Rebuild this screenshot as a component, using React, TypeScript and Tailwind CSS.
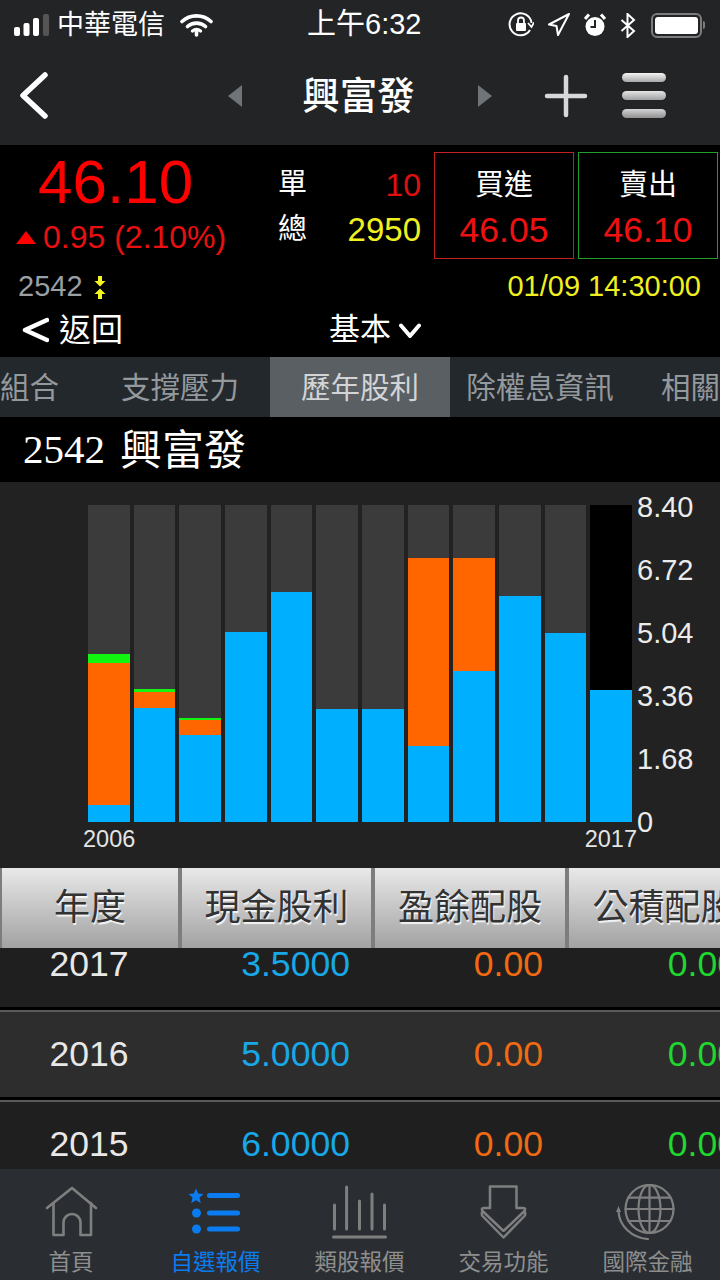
import React from "react";

const bars = [
  { blue: 17, orange: 142, green: 9 },
  { blue: 114, orange: 16, green: 3 },
  { blue: 87, orange: 15, green: 2 },
  { blue: 190 },
  { blue: 230 },
  { blue: 113 },
  { blue: 113 },
  { blue: 76, orange: 188 },
  { blue: 151, orange: 113 },
  { blue: 226 },
  { blue: 189 },
  { blue: 132, black: true },
];

const rows = [
  { year: "2017", cash: "3.5000", alt: false },
  { year: "2016", cash: "5.0000", alt: true },
  { year: "2015", cash: "6.0000", alt: false },
];

const axis = ["8.40", "6.72", "5.04", "3.36", "1.68", "0"];

function StatusLeft() {
  return (
    <div className="flex items-center w-[307px] shrink-0 pl-[14px]">
      <svg width="37" height="24" viewBox="0 0 37 24" className="shrink-0">
        <rect x="0" y="14" width="6" height="9" rx="2" fill="#fff" />
        <rect x="9.5" y="10" width="6" height="13" rx="2" fill="#fff" />
        <rect x="19" y="5" width="6" height="18" rx="2" fill="#fff" />
        <rect x="29" y="1" width="6" height="22" rx="2" fill="#555" />
      </svg>
      <span className="ml-[6px] text-[27px] leading-[34px] text-white whitespace-nowrap">中華電信</span>
      <svg width="33" height="24" viewBox="0 0 33 24" className="ml-[15px] shrink-0" fill="none" stroke="#fff" strokeLinecap="round">
        <path d="M2 8.5C10 1 23 1 31 8.5" strokeWidth="3.6" />
        <path d="M7.5 13.5C12.5 9 20.5 9 25.5 13.5" strokeWidth="3.6" />
        <path d="M12.5 18C15 16 18 16 20.5 18" strokeWidth="3.4" />
        <path d="M16.5 19.5v2.5" strokeWidth="3.6" />
      </svg>
    </div>
  );
}

function StatusRight() {
  return (
    <div className="ml-auto flex items-center pr-[15px]">
      <svg width="26" height="26" viewBox="0 0 26 26" fill="none" stroke="#fff" className="shrink-0">
        <path d="M22 18A11 11 0 1 1 23.5 11" strokeWidth="2" />
        <path d="M20 11l3.5 4 2.500-4.500" strokeWidth="1.800" />
        <rect x="8" y="11" width="10" height="8" rx="1" fill="#fff" stroke="none" />
        <path d="M10 11V8.500a3 3 0 0 1 6 0V11" strokeWidth="1.800" />
      </svg>
      <svg width="22" height="24" viewBox="0 0 22 24" className="ml-[14px] shrink-0" fill="none" stroke="#fff" strokeWidth="2" strokeLinejoin="round">
        <path d="M21 1L10 22l-1.500-9L1 11.500z" />
      </svg>
      <svg width="22" height="24" viewBox="0 0 22 24" className="ml-[14px] shrink-0">
        <circle cx="11" cy="13.500" r="9.500" fill="#fff" />
        <path d="M11 7v7H6.500" fill="none" stroke="#222426" strokeWidth="2" />
        <path d="M1 6l4-4.500M21 6l-4-4.500" stroke="#fff" strokeWidth="3" />
      </svg>
      <svg width="16" height="25" viewBox="0 0 16 25" className="ml-[14px] shrink-0" fill="none" stroke="#fff" strokeWidth="2">
        <path d="M1.500 7L14 18l-6.500 6V1L14 7 1.500 18" />
      </svg>
      <div className="ml-[15px] flex items-center">
        <div className="w-[51px] h-[25px] rounded-[6px] border-[2.5px] border-[#7c7c7c] p-[2px]">
          <div className="w-full h-full rounded-[3px] bg-white" />
        </div>
        <div className="ml-[1px] w-[2px] h-[8px] rounded-r-sm bg-[#7c7c7c]" />
      </div>
    </div>
  );
}

function NavBar() {
  return (
    <div className="flex items-center h-[95px] pb-[4px]">
      <svg width="30" height="47" viewBox="0 0 30 47" className="ml-[19px] shrink-0" fill="none" stroke="#fff" strokeWidth="5.500" strokeLinecap="round" strokeLinejoin="round">
        <path d="M26 3L4 23.500 26 44" />
      </svg>
      <svg width="14" height="22" viewBox="0 0 14 22" className="ml-[179px] shrink-0">
        <path d="M14 0v22L0 11z" fill="#6f7478" />
      </svg>
      <span className="ml-[60px] w-[113px] text-center text-[37.500px] leading-[50px] font-medium text-white whitespace-nowrap">興富發</span>
      <svg width="14" height="22" viewBox="0 0 14 22" className="ml-[63px] shrink-0">
        <path d="M0 0v22l14-11z" fill="#6f7478" />
      </svg>
      <svg width="44" height="44" viewBox="0 0 44 44" className="ml-[52px] shrink-0" fill="none" stroke="#d8d8d8" strokeWidth="4.500" strokeLinecap="round">
        <path d="M22 3v38M3 22h38" />
      </svg>
      <div className="ml-[34px] flex flex-col gap-[9px] w-[44px]">
        <div className="h-[9px] rounded-full bg-gradient-to-b from-[#f5f5f5] to-[#a8a8a8]" />
        <div className="h-[9px] rounded-full bg-gradient-to-b from-[#e5e5e5] to-[#a0a0a0]" />
        <div className="h-[9px] rounded-full bg-gradient-to-b from-[#d5d5d5] to-[#909090]" />
      </div>
    </div>
  );
}

function Info() {
  return (
    <div className="h-[212px] bg-black">
      <div className="flex h-[114px]">
        <div className="w-[278px] shrink-0 pt-[6px]">
          <div className="pl-[38px] text-[62px] leading-[62px] text-[#ff0000]">46.10</div>
          <div className="mt-[7px] pl-[16px] flex items-center text-[32px] leading-[34px] text-[#e81010] whitespace-nowrap">
            <span className="w-0 h-0 border-l-[10px] border-r-[10px] border-b-[13px] border-l-transparent border-r-transparent border-b-[#ff0000]" />
            <span className="ml-[7px]">0.95 (2.10%)</span>
          </div>
        </div>
        <div className="w-[143px] shrink-0 pt-[23px]">
          <div className="flex justify-between items-center h-[34px]">
            <span className="text-[29px] text-white">單</span>
            <span className="text-[32px] text-[#e01010]">10</span>
          </div>
          <div className="mt-[11px] flex justify-between items-center h-[34px]">
            <span className="text-[29px] text-white">總</span>
            <span className="text-[33px] text-[#f0f020]">2950</span>
          </div>
        </div>
        <div className="ml-[13px] mt-[7px] flex gap-[4px] shrink-0">
          <div className="w-[140px] h-[107px] border border-[#c42222] flex flex-col items-center pt-[15px]">
            <span className="text-[29px] leading-[34px] text-white">買進</span>
            <span className="mt-[11px] text-[35.500px] leading-[34px] text-[#ee1111]">46.05</span>
          </div>
          <div className="w-[140px] h-[107px] border border-[#1f9f2a] flex flex-col items-center pt-[15px]">
            <span className="text-[29px] leading-[34px] text-white">賣出</span>
            <span className="mt-[11px] text-[35.500px] leading-[34px] text-[#ee1111]">46.10</span>
          </div>
        </div>
      </div>
      <div className="mt-[13px] flex items-center h-[30px] pl-[18px] pr-[19px]">
        <span className="text-[29px] text-[#9a9fa3]">2542</span>
        <svg width="12" height="23" viewBox="0 0 12 23" className="ml-[11px] shrink-0" fill="#f5f520">
          <path d="M4 0h4v5h3.500L6 10.500.5 5H4zM6 12.500L11.500 18H8v5H4v-5H.5z" />
        </svg>
        <span className="ml-auto text-[29px] text-[#f0f020]">01/09 14:30:00</span>
      </div>
      <div className="mt-[10px] flex items-center h-[36px] pl-[21px]">
        <svg width="28" height="26" viewBox="0 0 28 26" className="shrink-0" fill="none" stroke="#fff" strokeWidth="4.500" strokeLinecap="round" strokeLinejoin="round">
          <path d="M26 3L4 13l22 10" />
        </svg>
        <span className="ml-[10px] text-[32px] leading-[36px] text-white">返回</span>
        <span className="ml-[206px] text-[31px] leading-[36px] text-white">基本</span>
        <svg width="24" height="15" viewBox="0 0 24 15" className="ml-[7px] shrink-0" fill="none" stroke="#fff" strokeWidth="4" strokeLinecap="round" strokeLinejoin="round">
          <path d="M3 2.500L12 13l9-10.500" />
        </svg>
      </div>
    </div>
  );
}

function Tabs() {
  const tabs = ["投資組合", "支撐壓力", "歷年股利", "除權息資訊", "相關新聞"];
  return (
    <div className="h-[60px] bg-[#23282c] flex -ml-[90px]">
      {tabs.map((t, i) => (
        <div
          key={t}
          className={
            i === 2
              ? "w-[180px] shrink-0 flex items-center justify-center pt-[3px] bg-[#5a5f63] text-[29.500px] text-[#d2d4d6] whitespace-nowrap"
              : "w-[180px] shrink-0 flex items-center justify-center pt-[3px] text-[29.500px] text-[#94999d] whitespace-nowrap"
          }
        >
          {t}
        </div>
      ))}
    </div>
  );
}

function Chart() {
  return (
    <div className="h-[386px] bg-[#222222] flex">
      <div className="ml-[88px] mt-[23px] w-[544px] shrink-0">
        <div className="flex gap-[4px] h-[317px]">
          {bars.map((b, i) => (
            <div key={i} className={b.black ? "flex-1 flex flex-col justify-end bg-black" : "flex-1 flex flex-col justify-end bg-[#3b3b3b]"}>
              {b.green ? <div className="bg-[#11f511]" style={{ height: b.green }} /> : null}
              {b.orange ? <div className="bg-[#ff6600]" style={{ height: b.orange }} /> : null}
              <div className="bg-[#00b0ff]" style={{ height: b.blue }} />
            </div>
          ))}
        </div>
        <div className="flex justify-between -ml-[5px] -mr-[5px] text-[23.500px] leading-[34px] text-[#e4e4e4]">
          <span>2006</span>
          <span>2017</span>
        </div>
      </div>
      <div className="ml-[5px] mt-[10px] h-[345px] flex flex-col justify-between text-[29px] leading-[30px] text-[#ececec]">
        {axis.map((a) => (
          <span key={a}>{a}</span>
        ))}
      </div>
    </div>
  );
}

function HeaderCell({ label, className }: { label: string; className: string }) {
  return (
    <div className={className}>
      <span className="text-[36px] text-[#333333] whitespace-nowrap [text-shadow:1px_2px_1px_rgba(255,255,255,0.85)]">{label}</span>
    </div>
  );
}

function Table() {
  const cell = "shrink-0 h-full flex items-center justify-center bg-gradient-to-b from-[#e9e9e9] to-[#a2a2a2]";
  return (
    <div className="h-[302px] overflow-hidden bg-[#1f1f1f]">
      <div className="relative z-10 h-[80px] flex gap-[4px] bg-[#7d7d7d] pl-[2px]">
        <HeaderCell label="年度" className={`${cell} w-[176px]`} />
        <HeaderCell label="現金股利" className={`${cell} w-[189px]`} />
        <HeaderCell label="盈餘配股" className={`${cell} w-[190px]`} />
        <HeaderCell label="公積配股" className={`${cell} w-[191px]`} />
      </div>
      <div className="-mt-[26px]">
        {rows.map((r) => (
          <div key={r.year}>
            <div className={r.alt ? "h-[85px] flex items-center bg-[#2d2d2d] text-[35.600px] whitespace-nowrap" : "h-[85px] flex items-center bg-[#1f1f1f] text-[35.600px] whitespace-nowrap"}>
              <span className="w-[178px] shrink-0 text-center text-[#e8e8e8]">{r.year}</span>
              <span className="w-[172px] shrink-0 text-right text-[#18a8e8]">{r.cash}</span>
              <span className="w-[193px] shrink-0 text-right text-[#f06a14]">0.00</span>
              <span className="w-[194px] shrink-0 text-right text-[#1fd82f]">0.00</span>
            </div>
            <div className="h-[3px] bg-black" />
            <div className="h-[2px] bg-[#5a5a5a]" />
          </div>
        ))}
      </div>
    </div>
  );
}

function TabBar() {
  const gray = "#7f7f7f";
  const label = "mt-[9px] text-[22.500px] leading-[28px] whitespace-nowrap";
  return (
    <div className="h-[111px] bg-[#2a2e33] grid grid-cols-5 pt-[15px] -mt-[1px] relative z-10">
      <div className="flex flex-col items-center">
        <svg width="56" height="56" viewBox="0 0 56 56" fill="none" stroke={gray} strokeWidth="2.600" strokeLinecap="round" strokeLinejoin="round">
          <path d="M3 24L28 4l24 20" />
          <path d="M9.500 19V51H19.500V38.500a8.500 8.500 0 0 1 17 0V51H47V19" />
        </svg>
        <span className={`${label} -ml-[2px] text-[#8e8e8e]`}>首頁</span>
      </div>
      <div className="flex flex-col items-center">
        <svg width="56" height="56" viewBox="0 0 56 56" fill="#0a7cf0">
          <path d="M8 4.500l2.200 5 5.300.5-4 3.600 1.200 5.400L8 16.200 3.300 19l1.200-5.400-4-3.600 5.300-.5z" />
          <circle cx="8.500" cy="29" r="4.500" />
          <circle cx="8.500" cy="45" r="4.500" />
          <rect x="19" y="9" width="33" height="5" rx="2.500" />
          <rect x="19" y="26.500" width="33" height="5" rx="2.500" />
          <rect x="19" y="42.500" width="33" height="5" rx="2.500" />
        </svg>
        <span className={`${label} -ml-[1px] text-[#0a7cf0]`}>自選報價</span>
      </div>
      <div className="flex flex-col items-center">
        <svg width="56" height="56" viewBox="0 0 56 56" fill="none" stroke={gray} strokeWidth="3" strokeLinecap="round">
          <path d="M2.500 21v24M14.600 3v42M27.500 17v28M40 10v35M52.500 21v24" />
          <path d="M1.500 53h52" />
        </svg>
        <span className={`${label} -ml-[1px] text-[#8e8e8e]`}>類股報價</span>
      </div>
      <div className="flex flex-col items-center">
        <svg width="56" height="56" viewBox="0 0 56 56" fill="none" stroke={gray} strokeWidth="2.500" strokeLinecap="round" strokeLinejoin="round">
          <path d="M14 24V2.500H40.500V24H47.500Q50 24 48.500 27L28 46.500Q27.500 47 27 46.500L6.500 27Q5 24 7.500 24Z" />
          <path d="M6.500 27Q5 30 6.500 32L27.500 53.500 48.500 32Q50 30 48.500 27" />
        </svg>
        <span className={`${label} -ml-[1px] text-[#8e8e8e]`}>交易功能</span>
      </div>
      <div className="flex flex-col items-center">
        <svg width="64" height="56" viewBox="0 0 64 56" fill="none" stroke={gray} strokeWidth="2.200" strokeLinecap="round">
          <circle cx="33.500" cy="25" r="24" />
          <ellipse cx="33.500" cy="25" rx="11" ry="24" />
          <path d="M33.500 1v48M12.500 13.700h42M9.500 25h48M12.500 37h42" />
          <path d="M2.500 27C3 42 16 54 32 55" />
          <path d="M2.500 22L0 28h5z" fill={gray} stroke="none" />
        </svg>
        <span className={`${label} -ml-[1px] text-[#8e8e8e]`}>國際金融</span>
      </div>
    </div>
  );
}

export default function App() {
  return (
    <div className="w-[720px] h-[1280px] overflow-hidden bg-black font-['Liberation_Sans','Noto_Sans_CJK_TC',sans-serif]">
      <div className="h-[145px] bg-[#222426]">
        <div className="flex items-center h-[50px]">
          <StatusLeft />
          <span className="text-[29px] text-white whitespace-nowrap">上午6:32</span>
          <StatusRight />
        </div>
        <NavBar />
      </div>
      <Info />
      <Tabs />
      <div className="h-[65px] bg-black flex items-center pl-[23px] pt-[1px] text-white whitespace-nowrap">
        <span className="font-['Liberation_Serif','Noto_Sans_CJK_TC',serif] text-[41px]">2542</span>
        <span className="ml-[15px] text-[42px]">興富發</span>
      </div>
      <Chart />
      <Table />
      <TabBar />
    </div>
  );
}
